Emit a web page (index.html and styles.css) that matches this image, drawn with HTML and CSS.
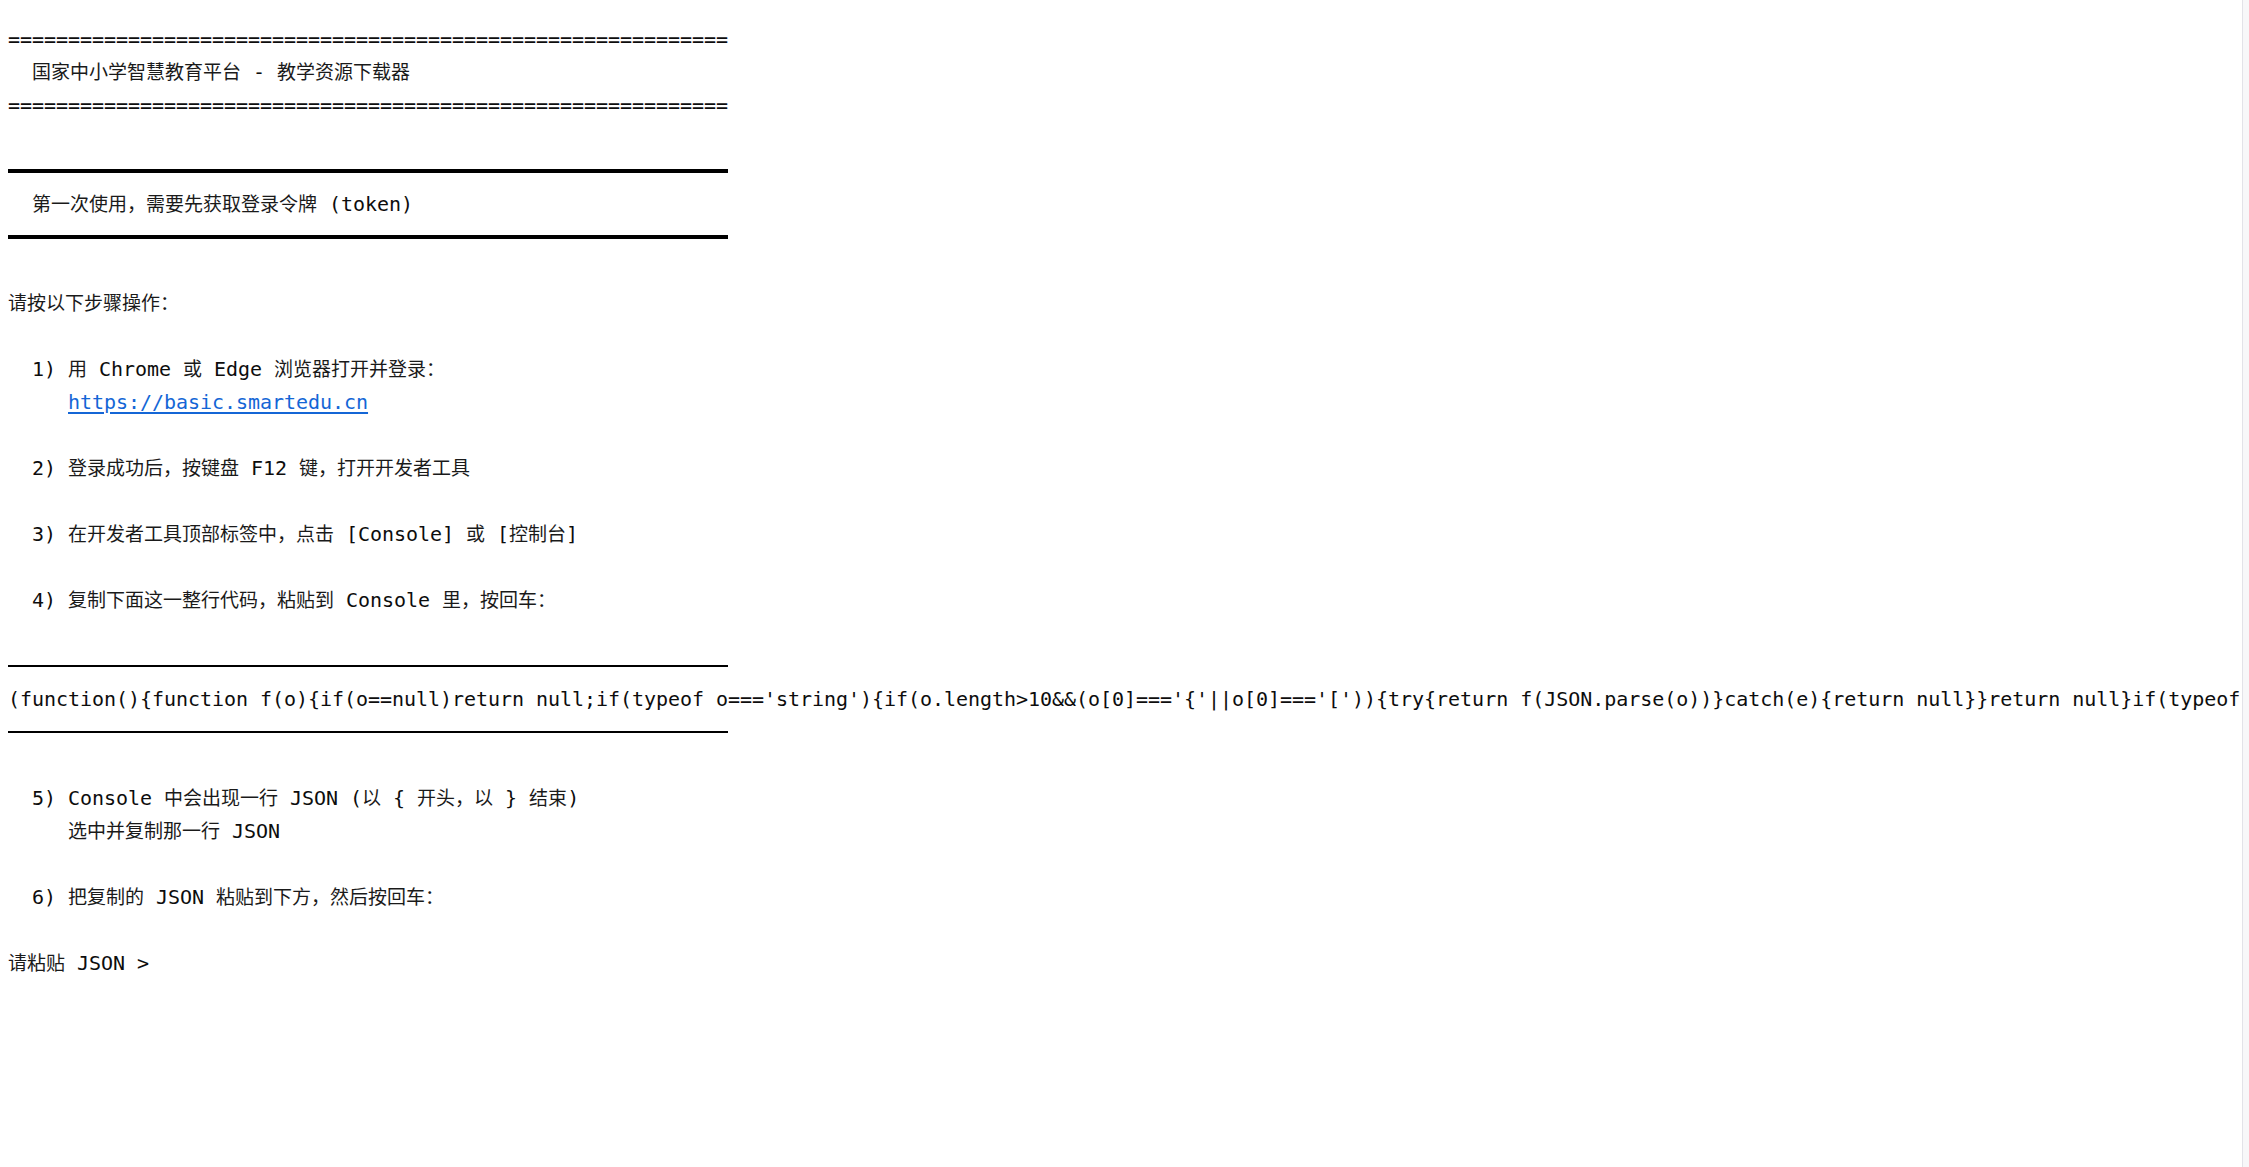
FILE: index.html
```html
<!DOCTYPE html>
<html lang="zh-CN">
<head>
<meta charset="utf-8">
<title>国家中小学智慧教育平台 - 教学资源下载器</title>
<link rel="stylesheet" href="styles.css">
</head>
<body>
<div class="app">
  <main class="console">
    <div class="ln">============================================================</div>
    <div class="ln">  <span class="z">国家中小学智慧教育平台</span> - <span class="z">教学资源下载器</span></div>
    <div class="ln">============================================================</div>
    <div class="ln"></div>
    <div class="ln rule-heavy"></div>
    <div class="ln">  <span class="z">第一次使用，需要先获取登录令牌</span> (token)</div>
    <div class="ln rule-heavy"></div>
    <div class="ln"></div>
    <div class="ln"><span class="z">请按以下步骤操作：</span></div>
    <div class="ln"></div>
    <div class="ln">  1) <span class="z">用</span> Chrome <span class="z">或</span> Edge <span class="z">浏览器打开并登录：</span></div>
    <div class="ln">     <a class="link" href="#">https://basic.smartedu.cn</a></div>
    <div class="ln"></div>
    <div class="ln">  2) <span class="z">登录成功后，按键盘</span> F12 <span class="z">键，打开开发者工具</span></div>
    <div class="ln"></div>
    <div class="ln">  3) <span class="z">在开发者工具顶部标签中，点击</span> [Console] <span class="z">或</span> [<span class="z">控制台</span>]</div>
    <div class="ln"></div>
    <div class="ln">  4) <span class="z">复制下面这一整行代码，粘贴到</span> Console <span class="z">里，按回车：</span></div>
    <div class="ln"></div>
    <div class="ln rule-light"></div>
    <div class="ln code">(function(){function f(o){if(o==null)return null;if(typeof o==='string'){if(o.length&gt;10&amp;&amp;(o[0]==='{'||o[0]==='[')){try{return f(JSON.parse(o))}catch(e){return null}}return null}if(typeof</div>
    <div class="ln rule-light"></div>
    <div class="ln"></div>
    <div class="ln">  5) Console <span class="z">中会出现一行</span> JSON (<span class="z">以</span> { <span class="z">开头，以</span> } <span class="z">结束</span>)</div>
    <div class="ln">     <span class="z">选中并复制那一行</span> JSON</div>
    <div class="ln"></div>
    <div class="ln">  6) <span class="z">把复制的</span> JSON <span class="z">粘贴到下方，然后按回车：</span></div>
    <div class="ln"></div>
    <div class="ln"><span class="z">请粘贴</span> JSON &gt;</div>
  </main>
  <div class="track"></div>
</div>
</body>
</html>
```

FILE: styles.css
```css
html, body {
  margin: 0;
  padding: 0;
  background: #ffffff;
  height: 100%;
  overflow: hidden;
}

.app {
  display: flex;
  height: 100vh;
}

.console {
  flex: 1;
  min-width: 0;
  overflow: hidden;
  padding: 23px 0 0 8px;
  font-family: "DejaVu Sans Mono", "Liberation Mono", "Noto Sans CJK SC", monospace;
  font-size: 20px;
  letter-spacing: -0.04px;
  color: #0d0d0d;
}

.ln {
  height: 33px;
  line-height: 33px;
  white-space: pre;
}

.z {
  font-family: "Noto Sans CJK SC", sans-serif;
  font-size: 19px;
  line-height: 1;
  letter-spacing: 0;
  color: #1a1a1a;
}

.link {
  color: #1466d6;
  text-decoration: underline;
  text-underline-offset: 3px;
}

.rule-heavy,
.rule-light {
  width: 720px;
  display: flex;
  flex-direction: column;
}

.rule-heavy::before {
  content: "";
  margin-top: 14px;
  height: 4px;
  background: #000;
}

.rule-light::before {
  content: "";
  margin-top: 15px;
  height: 2px;
  background: #000;
}

.track {
  width: 6px;
  flex: none;
  border-left: 1px solid #e2e2e8;
  background: #f7f7f9;
}
```
